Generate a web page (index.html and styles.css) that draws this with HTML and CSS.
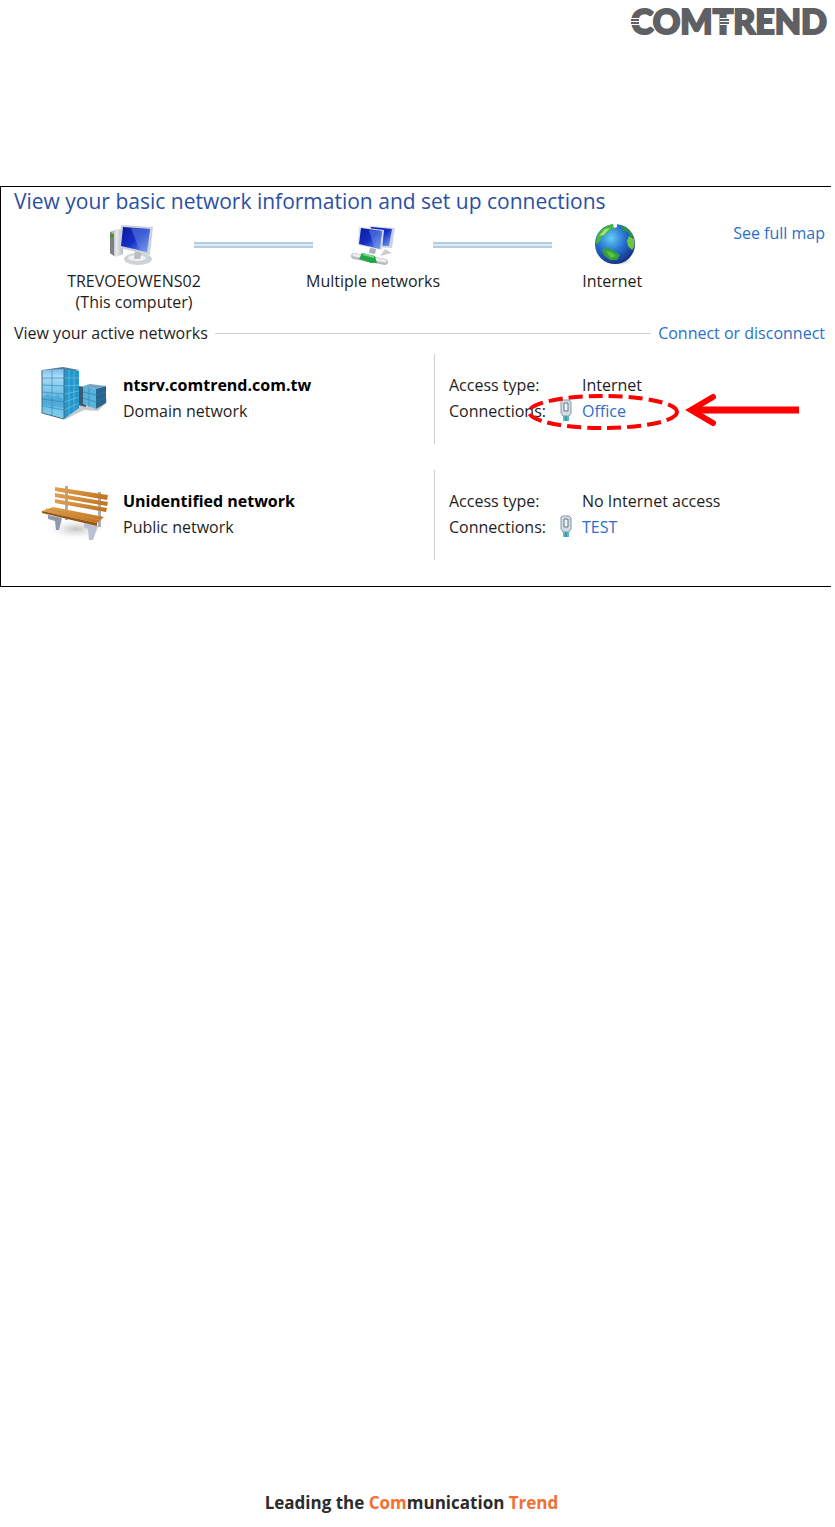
FILE: index.html
```html
<!DOCTYPE html>
<html lang="en">
<head>
  <meta charset="UTF-8">
  <meta name="viewport" content="width=device-width, initial-scale=1.0">
  <title>Comtrend - Network connections</title>
  <link rel="stylesheet" href="styles.css">
</head>
<body>
  <header class="page-header">
    <div class="logo">COMTREND<span class="stripes stripes-c"></span><span class="stripes stripes-t"></span></div>
  </header>

  <main class="panel">
    <h1>View your basic network information and set up connections</h1>

    <section class="map">
      <div class="node">
        <svg class="node-icon" viewBox="2 0 48 44" aria-hidden="true">
          <defs>
            <linearGradient id="screen" x1="0" y1="0" x2="1" y2="1">
              <stop offset="0" stop-color="#0a1a9c"/>
              <stop offset=".5" stop-color="#1630c4"/>
              <stop offset="1" stop-color="#7fa4f4"/>
            </linearGradient>
            <linearGradient id="metal" x1="0" y1="0" x2="1" y2="0">
              <stop offset="0" stop-color="#8d9296"/>
              <stop offset=".5" stop-color="#e8eaec"/>
              <stop offset="1" stop-color="#b4b8bc"/>
            </linearGradient>
          </defs>
          <path d="M2 9 L9 6 L15 7 V31 L8 34 L2 30 Z" fill="url(#metal)"/>
          <path d="M2 9 L6 11 V33 L2 30 Z" fill="#7b8084"/>
          <circle cx="4" cy="13" r="2" fill="#3f9a2e"/>
          <ellipse cx="30" cy="36" rx="14" ry="6" fill="#d0d3d6"/>
          <ellipse cx="29" cy="35" rx="9" ry="3" fill="#f0f1f2"/>
          <path d="M27 28 L34 29 L32 36 H26 Z" fill="#b9bdc1"/>
          <path d="M13 2 L45 4 L42 32 L11 25 Z" fill="#cbd2de"/>
          <path d="M15 4 L42 6 L39 29 L13 23 Z" fill="url(#screen)"/>
          <path d="M23 5 L42 6 L39 28 L31 26 Z" fill="#6d94ee" opacity=".45"/>
        </svg>
        <div class="node-label">TREVOEOWENS02<br>(This computer)</div>
      </div>
      <div class="link-line"></div>
      <div class="node">
        <svg class="node-icon" viewBox="0 0 48 44" aria-hidden="true">
          <path d="M20 3 L46 5 L43 25 L25 24 Z" fill="#ccd4e4"/>
          <path d="M22 4 L43 6 L40 23 L24 22 Z" fill="url(#screen)"/>
          <path d="M36 26 L43 30 L31 33 Z" fill="#c9ced3"/>
          <path d="M10 4 L35 7 L33 27 L9 22 Z" fill="#d9deea"/>
          <path d="M12 5 L33 8 L31 26 L10 21 Z" fill="url(#screen)"/>
          <path d="M20 7 L33 8 L31 26 L25 24 Z" fill="#7b9df0" opacity=".45"/>
          <path d="M21 25 L27 26 L26 31 L20 30 Z" fill="#aab0b6"/>
          <path d="M5 33 L36 39" stroke="#b8bcc0" stroke-width="6" stroke-linecap="round"/>
          <path d="M5 32 L36 38" stroke="#eceeef" stroke-width="3" stroke-linecap="round"/>
          <path d="M13 30 L26 33 L28 40 L22 40 L10 36 Z" fill="#25a54a"/>
          <path d="M14 31 L25 34" stroke="#7fd68f" stroke-width="2"/>
        </svg>
        <div class="node-label">Multiple networks</div>
      </div>
      <div class="link-line"></div>
      <div class="node">
        <svg class="node-icon" viewBox="0 0 48 44" aria-hidden="true">
          <defs>
            <radialGradient id="ocean" cx=".4" cy=".35" r=".7">
              <stop offset="0" stop-color="#63cdf2"/>
              <stop offset=".5" stop-color="#2670d2"/>
              <stop offset="1" stop-color="#14297f"/>
            </radialGradient>
            <radialGradient id="shade">
              <stop offset="0" stop-color="#777"/>
              <stop offset="1" stop-color="#fff" stop-opacity="0"/>
            </radialGradient>
          </defs>
          <ellipse cx="30" cy="38" rx="18" ry="5" fill="url(#shade)"/>
          <circle cx="27" cy="21" r="20" fill="url(#ocean)"/>
          <path d="M8 20 C8 10 15 3 25 1 L27 5 L22 7 L19 11 L14 13 L13 17 L9 21 Z" fill="#47b53c"/>
          <path d="M11 13 L17 6 L22 5 L16 12 Z" fill="#a2e27c"/>
          <path d="M32 2 C39 4 44 9 46 15 L42 13 L40 9 L35 8 Z" fill="#2f9345"/>
          <path d="M41 13 L46 16 C47 22 46 25 44 27 L40 23 L39 18 Z" fill="#6dc540"/>
          <path d="M16 25 L23 26 L29 30 L32 32 L29 37 L22 37 L17 33 L14 28 Z" fill="#36a13b"/>
          <path d="M18 28 L23 29 L28 33 L23 35 Z" fill="#5bc442"/>
          <path d="M25 1 L29 1 L29 4 L26 5 Z" fill="#eefaff"/>
        </svg>
        <div class="node-label">Internet</div>
      </div>
      <a class="map-link" href="#">See full map</a>
    </section>

    <div class="section-title">
      <h2>View your active networks</h2>
      <span class="rule"></span>
      <a href="#">Connect or disconnect</a>
    </div>

    <section class="network">
      <div class="network-info">
        <svg class="network-icon" viewBox="0 0 72 60" aria-hidden="true">
          <defs>
            <linearGradient id="glass" x1="0" y1="0" x2="0" y2="1">
              <stop offset="0" stop-color="#7fb9e6"/>
              <stop offset=".15" stop-color="#a8dbf5"/>
              <stop offset=".6" stop-color="#62b9e2"/>
              <stop offset="1" stop-color="#80d0ee"/>
            </linearGradient>
          </defs>
          <path d="M26 54 L46 44 L60 45 L69 36 L68 30 L40 28 Z" fill="#c7cacd"/>
          <path d="M40 20 L48 21 V41 L40 39 Z" fill="#3a5a70"/>
          <path d="M45 20 L52 18 L68 20 L58 23 Z" fill="#73a5c2"/>
          <path d="M45 20 L58 23 V43 L45 38 Z" fill="#58b4dc"/>
          <path d="M58 23 L68 20 V37 L58 43 Z" fill="#27668f"/>
          <path d="M45 26 L58 29 L68 26 M45 32 L58 36 L68 31 M51 21 V41" fill="none" stroke="#2a7cab" stroke-opacity=".6"/>
          <path d="M4 4 L25 1 L41 4 L26 8 Z" fill="#567a91"/>
          <path d="M4 4 L26 3 V53 L4 47 Z" fill="url(#glass)"/>
          <path d="M26 3 L41 5 V42 L26 53 Z" fill="#2396cb"/>
          <path d="M4 32 L10 27 L14 32 L20 28 L26 35 V42 L4 39 Z" fill="#389ccd" opacity=".5"/>
          <path d="M4 12 L26 12 M4 19 L26 20 M4 26 L26 28 M4 33 L26 36 M4 40 L26 44 M14 4 V50" fill="none" stroke="#3180ad" stroke-opacity=".6"/>
          <path d="M26 12 L41 12 M26 20 L41 19 M26 28 L41 25 M26 36 L41 31 M26 44 L41 37 M31 4 V49 M36 5 V45" fill="none" stroke="#70cbed" stroke-opacity=".6"/>
          <path d="M4 4 V47 L26 53 V3" fill="none" stroke="#476a80"/>
        </svg>
        <div>
          <strong>ntsrv.comtrend.com.tw</strong><br>
          Domain network
        </div>
      </div>
      <dl class="details">
        <dt>Access type:</dt>
        <dd>Internet</dd>
        <dt>Connections:</dt>
        <dd>
          <svg class="plug" viewBox="0 0 14 24" aria-hidden="true">
            <path d="M4 16 H10 V22 H4 Z" fill="#56bac8"/>
            <path d="M7 17 V22" stroke="#277987"/>
            <path d="M2 2 L4 1 H10 L12 3 V14 L10 17 H4 L2 14 Z" fill="#d3dce5" stroke="#8996a3"/>
            <path d="M5 4 H9 V12 H5 Z" fill="#eef3f7" stroke="#687989"/>
          </svg>
          <a href="#">Office</a>
        </dd>
      </dl>
      <!-- red marker round the Office connection -->
      <svg class="marker" viewBox="0 0 274 38" aria-hidden="true">
        <ellipse cx="77" cy="19" rx="74" ry="16" fill="none" stroke="#f00" stroke-width="4" stroke-dasharray="14 6"/>
        <path d="M168 17 H273" stroke="#f00" stroke-width="7"/>
        <path d="M187 4 L165 17 L187 30" fill="none" stroke="#f00" stroke-width="6" stroke-linecap="round"/>
      </svg>
    </section>

    <section class="network">
      <div class="network-info">
        <svg class="network-icon" viewBox="0 -2 72 60" aria-hidden="true">
          <defs>
            <linearGradient id="wood" x1="0" y1="0" x2="1" y2="1">
              <stop offset="0" stop-color="#e3a452"/>
              <stop offset="1" stop-color="#bd6f1c"/>
            </linearGradient>
          </defs>
          <ellipse cx="38" cy="45" rx="33" ry="12" fill="url(#shade)" opacity=".45"/>
          <path d="M27 2 H30 V36 H27 Z M60 8 H63 V43 H60 Z" fill="#a6adbf"/>
          <path d="M17 3 L70 11 L69 16 L17 7 Z" fill="url(#wood)"/>
          <path d="M17 9 L70 18 L69 22 L17 13 Z" fill="url(#wood)"/>
          <path d="M17 15 L69 24 L68 28 L17 19 Z" fill="url(#wood)"/>
          <path d="M10 31 L24 34 L21 46 L18 46 L17 37 L10 35 Z" fill="#8f98ad"/>
          <path d="M46 39 L60 42 L55 56 H51 L50 45 L46 43 Z" fill="#b9c1d3"/>
          <path d="M4 27 L15 23 L66 33 L59 39 Z" fill="url(#wood)"/>
          <path d="M4 27 L59 39 V42 L4 29 Z" fill="#955515"/>
          <path d="M8 25 L62 36" stroke="#d18c3c"/>
        </svg>
        <div>
          <strong>Unidentified network</strong><br>
          Public network
        </div>
      </div>
      <dl class="details">
        <dt>Access type:</dt>
        <dd>No Internet access</dd>
        <dt>Connections:</dt>
        <dd>
          <svg class="plug" viewBox="0 0 14 24" aria-hidden="true">
            <path d="M4 16 H10 V22 H4 Z" fill="#56bac8"/>
            <path d="M7 17 V22" stroke="#277987"/>
            <path d="M2 2 L4 1 H10 L12 3 V14 L10 17 H4 L2 14 Z" fill="#d3dce5" stroke="#8996a3"/>
            <path d="M5 4 H9 V12 H5 Z" fill="#eef3f7" stroke="#687989"/>
          </svg>
          <a href="#">TEST</a>
        </dd>
      </dl>
    </section>
  </main>

  <footer class="page-footer">
    Leading the <span>Com</span>munication <span>Trend</span>
  </footer>
</body>
</html>
```
FILE: styles.css
```css
* {
  box-sizing: border-box;
}
body {
  margin: 0;
  min-height: 100vh;
  display: flex;
  flex-direction: column;
  background: #fff;
  color: #1e1e1e;
  font-family: "Open Sans", "Noto Sans", sans-serif;
  font-size: 16px;
  line-height: 21px;
}
a {
  color: #2a6fc9;
  text-decoration: none;
}
.page-header {
  display: flex;
  justify-content: flex-end;
  height: 186px;
  padding: 0 8px;
}
.logo {
  position: relative;
  height: 42px;
  color: #5f6063;
  font-family: Lato, sans-serif;
  font-size: 34px;
  font-weight: 900;
  line-height: 42px;
  -webkit-text-stroke: 2px #5f6063;
}
/* white cuts through the C and the T */
.stripes {
  position: absolute;
  top: 18px;
  height: 7px;
  background: repeating-linear-gradient(#fff 0 1px, #5f6063 1px 3px);
}
.stripes-c {
  left: 0;
  width: 8px;
}
.stripes-t {
  left: 89px;
  width: 9px;
}

.panel {
  margin-right: 4px;
  padding-bottom: 26px;
  border: 1px solid #000;
  border-right: 0;
}
h1 {
  margin: 0 0 8px 13px;
  color: #2b4fa2;
  font-size: 21px;
  font-weight: 400;
  line-height: 28px;
}
.map {
  display: flex;
  align-items: flex-start;
  padding: 0 6px 0 73px;
}
.node {
  display: flex;
  flex-direction: column;
  align-items: center;
  width: 120px;
}
.node-icon {
  width: 48px;
  height: 44px;
}
.node-label {
  margin-top: 4px;
  text-align: center;
  white-space: nowrap;
}
.link-line {
  flex: 1;
  height: 6px;
  margin-top: 19px;
  border: solid #b3cde3;
  border-width: 2px 0;
  background: #dfeaf3;
}
.map-link {
  margin-left: 61px;
}

.section-title {
  display: flex;
  align-items: center;
  gap: 7px;
  margin-top: 10px;
  padding: 0 6px 0 13px;
}
.section-title h2 {
  margin: 0;
  font-size: 16px;
  font-weight: 400;
}
.rule {
  flex: 1;
  height: 1px;
  background: #d0d0d0;
}

.network {
  position: relative;
  display: flex;
  height: 90px;
  margin-top: 26px;
  line-height: 26px;
}
.section-title + .network {
  margin-top: 10px;
}
.network-info {
  display: flex;
  gap: 13px;
  width: 433px;
  padding: 18px 0 0 37px;
}
.network-info strong {
  color: #000;
}
.network-icon {
  width: 72px;
  height: 60px;
  margin-top: -6px;
}
.details {
  display: grid;
  grid-template-columns: 133px 1fr;
  align-content: start;
  flex: 1;
  margin: 0;
  padding: 18px 0 0 14px;
  border-left: 1px solid #cfcfcf;
}
.details dd {
  position: relative;
  margin: 0;
}
.plug {
  position: absolute;
  right: 100%;
  top: 1px;
  width: 14px;
  height: 24px;
  margin-right: 9px;
}
.marker {
  position: absolute;
  left: 525px;
  top: 39px;
  width: 274px;
  height: 38px;
}

.page-footer {
  margin-top: auto;
  padding: 0 12px 12px 0;
  color: #2b2b2b;
  font-size: 17px;
  font-weight: 700;
  line-height: 24px;
  text-align: center;
}
.page-footer span {
  color: #f36f32;
}
```
